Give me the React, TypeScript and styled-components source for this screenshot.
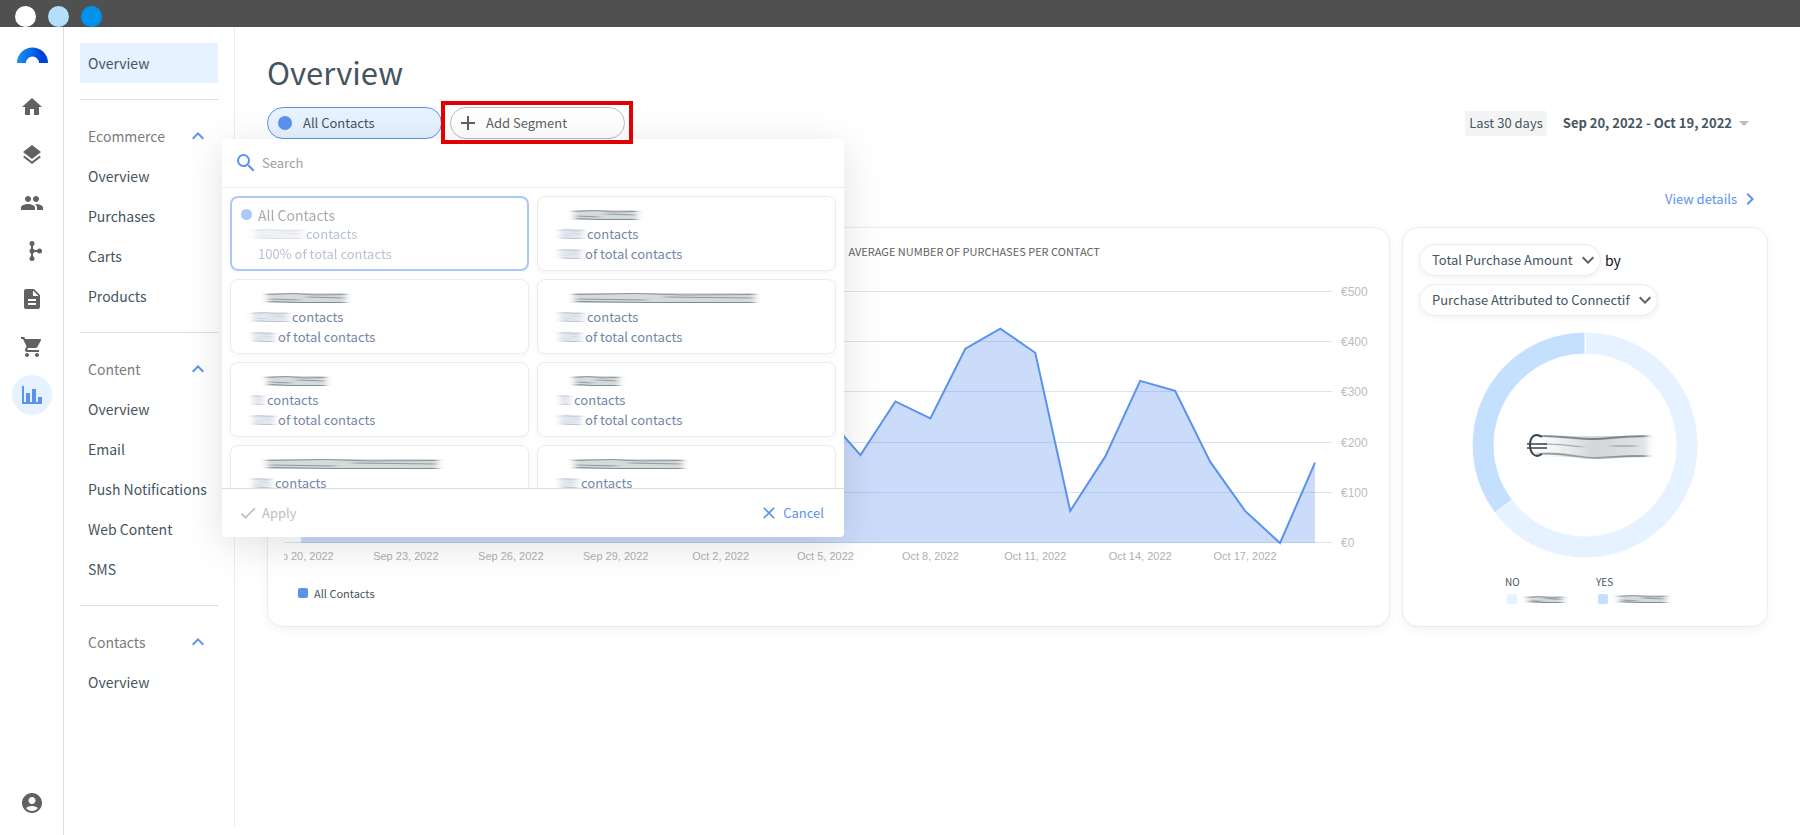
import React, { useId } from "react";
import styled, { createGlobalStyle } from "styled-components";
import {
  MdAccountCircle,
  MdAdd,
  MdArrowDropDown,
  MdCheck,
  MdChevronRight,
  MdClose,
  MdDescription,
  MdKeyboardArrowDown,
  MdKeyboardArrowUp,
  MdHome,
  MdLayers,
  MdPeople,
  MdSearch,
  MdShoppingCart,
} from "react-icons/md";

const color = {
  ink: "#455560",
  grey: "#616161",
  muted: "#7b7b7b",
  blue: "#5b92ee",
  pale: "#e6f2ff",
  slate: "#7486a8",
  line: "#dddddd",
  soft: "#ececec",
};

const GlobalStyle = createGlobalStyle`
  *, *::before, *::after { box-sizing: border-box; }
  body {
    margin: 0;
    background: #fff;
    color: ${color.ink};
    font-family: "Noto Sans CJK SC", "Noto Sans", sans-serif;
    font-size: 14px;
    line-height: 20px;
  }
  button, input, select { font: inherit; color: inherit; }
  a { color: inherit; text-decoration: none; }
  ul { list-style: none; margin: 0; padding: 0; }
`;

/* ---------- frame ---------- */

const Page = styled.div`
  display: flex;
  flex-direction: column;
  min-height: 100vh;
`;

const WindowBar = styled.div`
  display: flex;
  align-items: flex-end;
  gap: 12px;
  height: 27px;
  padding-left: 15px;
  background: #505050;
`;

const WindowDot = styled.span<{ $fill: string }>`
  width: 21px;
  height: 21px;
  border-radius: 50%;
  background: ${(p) => p.$fill};
`;

const Body = styled.div`
  display: flex;
  flex: 1;
`;

const Rail = styled.nav`
  display: flex;
  flex-direction: column;
  align-items: center;
  gap: 8px;
  flex: none;
  width: 64px;
  padding: 12px 0 12px 1px;
  border-right: 1px solid ${color.line};
`;

const Logo = styled.svg`
  margin: 8px 0 16px;
`;

const RailLink = styled.a<{ $active?: boolean }>`
  display: grid;
  place-items: center;
  width: 40px;
  height: 40px;
  border-radius: 50%;
  font-size: 24px;
  color: ${(p) => (p.$active ? color.blue : color.grey)};
  background: ${(p) => (p.$active ? color.pale : "transparent")};

  &:last-child { margin-top: auto; }
`;

const SideNav = styled.nav`
  flex: none;
  width: 171px;
  margin-bottom: 8px;
  padding: 16px 16px 0;
  border-right: 1px solid ${color.soft};
`;

const NavSection = styled.ul`
  & + & {
    margin-top: 16px;
    padding-top: 16px;
    border-top: 1px solid ${color.line};
  }
`;

const NavLink = styled.a<{ $active?: boolean }>`
  display: block;
  height: 40px;
  padding-left: 8px;
  font-size: 14px;
  line-height: 41px;
  white-space: nowrap;
  background: ${(p) => (p.$active ? color.pale : "transparent")};
`;

const NavHeading = styled.button`
  display: flex;
  align-items: center;
  justify-content: space-between;
  width: 100%;
  height: 40px;
  padding: 0 8px;
  border: 0;
  background: none;
  font-size: 14px;
  color: ${color.muted};

  svg { color: ${color.blue}; font-size: 24px; }
`;

/* ---------- main column ---------- */

const Main = styled.main`
  flex: 1;
  min-width: 0;
  padding: 23px 32px;
`;

const Title = styled.h1`
  margin: 0 0 13px;
  font-size: 31px;
  font-weight: 400;
  line-height: 44px;
`;

const Toolbar = styled.div`
  position: relative;
  display: flex;
  align-items: center;
  justify-content: space-between;
  height: 32px;
`;

const Segments = styled.div`
  display: flex;
  gap: 8px;
`;

const SegmentPill = styled.button<{ $selected?: boolean }>`
  display: flex;
  align-items: center;
  gap: 9px;
  width: 175px;
  height: 32px;
  padding: 0 8px;
  border: 1px solid ${(p) => (p.$selected ? color.blue : "#bdbdbd")};
  border-radius: 16px;
  background: ${(p) => (p.$selected ? color.pale : "#fff")};
  color: ${(p) => (p.$selected ? color.ink : color.grey)};
  font-size: 13px;

  svg { font-size: 24px; }
`;

const PillIcon = styled.span`
  display: flex;
  flex: none;
  justify-content: center;
  width: 18px;

  svg { flex: none; }
`;

const Highlighted = styled.div`
  position: relative;

  &::after {
    content: "";
    position: absolute;
    inset: -6px -8px -5px -9px;
    z-index: 3;
    border: 4px solid #e30000;
    pointer-events: none;
  }
`;

const Dot = styled.span<{ $size: number }>`
  flex: none;
  width: ${(p) => p.$size}px;
  height: ${(p) => p.$size}px;
  border-radius: 50%;
  background: ${color.blue};
`;

const DateRange = styled.button`
  display: flex;
  align-items: center;
  padding: 0;
  margin-right: 12px;
  border: 0;
  background: none;
  font-size: 13px;

  strong { margin-left: 16px; font-weight: 700; }
  svg { font-size: 24px; color: #bdbdbd; }
`;

const RangeChip = styled.span`
  padding: 2px 4px 3px;
  border-radius: 2px;
  background: #f4f4f4;
`;

const DetailsRow = styled.div`
  display: flex;
  justify-content: flex-end;
  padding: 48px 6px 16px;
`;

const DetailsLink = styled.a`
  display: flex;
  align-items: center;
  gap: 1px;
  color: ${color.blue};
  font-size: 13px;

  svg { font-size: 24px; }
`;

const Cards = styled.div`
  display: grid;
  grid-template-columns: minmax(0, 1fr) 366px;
  gap: 12px;
`;

const Card = styled.section`
  display: flex;
  flex-direction: column;
  min-height: 400px;
  padding: 16px;
  border: 1px solid ${color.soft};
  border-radius: 16px;
  background: #fff;
  box-shadow: 0 3px 10px rgba(0, 0, 0, 0.05);
`;

/* ---------- area chart ---------- */

const ChartTitle = styled.h2`
  margin: 0 0 12px;
  padding-left: calc(50% + 20px);
  font-size: 11px;
  font-weight: 400;
  line-height: 15px;
  white-space: nowrap;
  color: ${color.grey};
`;

const ChartSvg = styled.svg`
  display: block;
  width: 100%;
  height: auto;
  font-family: "Liberation Sans", Arial, sans-serif;
  font-size: 11px;
`;

const ValueLabel = styled.text`
  font-size: 12px;
  fill: #bdbdbd;
`;

const ChartLegend = styled.div`
  display: flex;
  align-items: center;
  gap: 6px;
  padding: 16px 14px 0;
  font-size: 11px;
`;

const Swatch = styled.span<{ $fill: string }>`
  width: 10px;
  height: 10px;
  border-radius: 2px;
  background: ${(p) => p.$fill};
`;

const values = [
  140, 120, 180, 230, 160, 110, 150, 210, 260, 190, 130, 170, 220, 290, 240,
  255, 175, 282, 248, 387, 427, 379, 64, 172, 323, 303, 162, 64, 0, 160,
];
const ticks = [
  "Sep 20, 2022",
  "Sep 23, 2022",
  "Sep 26, 2022",
  "Sep 29, 2022",
  "Oct 2, 2022",
  "Oct 5, 2022",
  "Oct 8, 2022",
  "Oct 11, 2022",
  "Oct 14, 2022",
  "Oct 17, 2022",
];
const axis = { left: 17, right: 1031, base: 272, unit: 0.502 };

function AreaChart() {
  const step = (axis.right - axis.left) / (values.length - 1);
  const points = values.map((v, i) => `${axis.left + i * step},${axis.base - v * axis.unit}`);
  return (
    <ChartSvg viewBox="0 0 1089 296" role="img" aria-label="Purchases per contact">
      {[500, 400, 300, 200, 100, 0].map((v) => {
        const y = Math.round(axis.base - v * axis.unit) - 0.5;
        return (
          <g key={v}>
            <line x1="0" x2="1048" y1={y} y2={y} stroke="#dbe3f2" />
            <ValueLabel x="1057" y={y + 4}>
              €{v}
            </ValueLabel>
          </g>
        );
      })}
      <polygon
        points={`${axis.left},${axis.base} ${points.join(" ")} ${axis.right},${axis.base}`}
        fill={color.blue}
        fillOpacity="0.32"
      />
      <polyline points={points.join(" ")} fill="none" stroke={color.blue} strokeWidth="2" />
      {ticks.map((label, i) => (
        <text key={label} x={axis.left + i * 3 * step} y="289" textAnchor="middle" fill="#b0b0b0">
          {label}
        </text>
      ))}
    </ChartSvg>
  );
}

/* ---------- donut card ---------- */

const Filters = styled.div`
  display: flex;
  flex-wrap: wrap;
  align-items: center;
  gap: 8px 4px;
  color: #111;
  font-size: 14px;
`;

const SelectPill = styled.label`
  position: relative;
  display: inline-flex;
  align-items: center;
  color: ${color.grey};

  select {
    height: 32px;
    padding: 0 27px 0 12px;
    border: 1px solid ${color.soft};
    border-radius: 16px;
    appearance: none;
    background: #fff;
    box-shadow: 0 2px 6px rgba(0, 0, 0, 0.06);
    color: ${color.ink};
    font-size: 13px;
  }

  svg {
    position: absolute;
    right: 1px;
    font-size: 24px;
    pointer-events: none;
  }
`;

const DonutSvg = styled.svg`
  display: block;
  align-self: center;
  margin-top: 16px;
  width: 226px;
  height: 226px;
`;

const DonutLegend = styled.dl`
  display: flex;
  gap: 29px;
  margin: 16px 0 0 86px;
  font-size: 10px;
  line-height: 16px;
  white-space: nowrap;

  dt { height: 16px; }
  dd { display: flex; align-items: center; gap: 8px; height: 18px; margin: 0 0 0 2px; }
`;

function slice(from: number, to: number) {
  const at = (turn: number, r: number) => {
    const a = turn * 2 * Math.PI;
    return `${113 + r * Math.sin(a)} ${113 - r * Math.cos(a)}`;
  };
  const big = to - from > 0.5 ? 1 : 0;
  return `M${at(from, 113)}A113 113 0 ${big} 1 ${at(to, 113)}L${at(to, 91)}A91 91 0 ${big} 0 ${at(from, 91)}Z`;
}

/* ---------- redacted values ---------- */

const SmudgeSvg = styled.svg`
  flex: none;
  display: block;
  overflow: visible;
`;

type SmudgeProps = { width: number; height?: number; tint: string; strong?: boolean };

function Smudge({ width, height = 14, tint, strong }: SmudgeProps) {
  const id = useId();
  const w = width;
  const h = height;
  return (
    <SmudgeSvg width={w} height={h} viewBox={`0 0 ${w} ${h}`} aria-hidden="true">
      <defs>
        <filter id={id} x="-20%" y="-50%" width="140%" height="200%">
          <feGaussianBlur stdDeviation="3 0.6" />
        </filter>
      </defs>
      <g filter={`url(#${id})`} fill="none" stroke={tint}>
        <rect x="3" y="2" width={w - 7} height={h - 4} fill={tint} stroke="none" opacity={strong ? 0.22 : 0.2} />
        <path d={`M2 3.500L${w * 0.35} 2.500L${w * 0.6} 4L${w - 4} 3.500`} opacity={strong ? 0.55 : 0.35} />
        <path d={`M6 ${h / 2 + 1}L${w * 0.4} ${h / 2 + 2}M${w * 0.5} ${h / 2 - 1}L${w - 6} ${h / 2}`} opacity={strong ? 0.5 : 0.2} />
        <path d={`M5 ${h - 3.5}L${w * 0.4} ${h - 2.5}L${w - 4} ${h - 2.5}`} opacity={strong ? 0.6 : 0.35} />
      </g>
    </SmudgeSvg>
  );
}

/* ---------- segment picker ---------- */

const Picker = styled.div`
  position: absolute;
  top: 100%;
  left: -45px;
  z-index: 2;
  width: 622px;
  border-radius: 4px;
  background: #fff;
  box-shadow: 0 8px 40px rgba(0, 0, 0, 0.12);
`;

const SearchRow = styled.label`
  display: flex;
  align-items: center;
  gap: 4px;
  height: 49px;
  padding: 0 12px;
  border-bottom: 1px solid ${color.soft};

  svg { font-size: 24px; color: ${color.blue}; }
  input {
    flex: 1;
    border: 0;
    outline: 0;
    padding: 0;
    background: none;
    font-size: 13px;
  }
  input::placeholder { color: #9e9e9e; opacity: 1; }
`;

const SegmentList = styled.ul`
  display: grid;
  grid-template-columns: 1fr 1fr;
  grid-auto-rows: 75px;
  gap: 8px;
  height: 300px;
  padding: 8px;
  overflow: hidden;
`;

const SegmentCard = styled.button<{ $selected?: boolean }>`
  display: flex;
  flex-direction: column;
  width: 100%;
  height: 100%;
  padding: ${(p) => (p.$selected ? "7px" : "8px")} 8px 0;
  border: ${(p) => (p.$selected ? `2px solid ${color.blue}` : `1px solid ${color.soft}`)};
  border-radius: 8px;
  background: #fff;
  box-shadow: 0 2px 6px rgba(0, 0, 0, 0.04);
  opacity: ${(p) => (p.$selected ? 0.5 : 1)};
  text-align: left;
`;

const SegmentName = styled.span<{ $inset: number }>`
  display: flex;
  flex: none;
  align-items: center;
  gap: 6px;
  height: 19px;
  padding-left: ${(p) => p.$inset}px;
  font-size: 14px;
  line-height: 18px;
  color: #555;
`;

const SegmentFact = styled.span<{ $inset: number }>`
  display: flex;
  flex: none;
  align-items: center;
  height: 20px;
  padding-left: ${(p) => p.$inset}px;
  font-size: 13px;
  white-space: nowrap;
  color: ${color.slate};
`;

const PickerFooter = styled.div`
  display: flex;
  justify-content: space-between;
  height: 49px;
  padding: 0 16px;
  border-top: 1px solid ${color.line};
`;

const TextButton = styled.button`
  display: flex;
  align-items: center;
  gap: 4px;
  padding: 0 4px 0 0;
  border: 0;
  background: none;
  font-size: 13px;
  color: ${color.blue};

  &:disabled { color: #bdbdbd; padding: 0; }
  svg { font-size: 20px; }
`;

const segments: { name: number; count: number; share?: number }[] = [
  { name: 70, count: 30, share: 28 },
  { name: 86, count: 42, share: 28 },
  { name: 188, count: 30, share: 28 },
  { name: 66, count: 17, share: 28 },
  { name: 52, count: 17, share: 28 },
  { name: 178, count: 25 },
  { name: 116, count: 24 },
];

function SegmentPicker() {
  return (
    <Picker role="dialog" aria-label="Segments">
      <SearchRow>
        <MdSearch />
        <input type="text" placeholder="Search" aria-label="Search" />
      </SearchRow>
      <SegmentList>
        <li>
          <SegmentCard type="button" $selected>
            <SegmentName $inset={1}>
              <Dot $size={11} />
              All Contacts
            </SegmentName>
            <SegmentFact $inset={12}>
              <Smudge width={54} tint={color.slate} />
              contacts
            </SegmentFact>
            <SegmentFact $inset={18}>100% of total contacts</SegmentFact>
          </SegmentCard>
        </li>
        {segments.map((s, i) => (
          <li key={i}>
            <SegmentCard type="button" aria-label="Segment">
              <SegmentName $inset={25}>
                <Smudge width={s.name} tint={color.ink} strong />
              </SegmentName>
              <SegmentFact $inset={11}>
                <Smudge width={s.count} tint={color.slate} />
                contacts
              </SegmentFact>
              {s.share && (
                <SegmentFact $inset={11}>
                  <Smudge width={s.share} tint={color.slate} />
                  of total contacts
                </SegmentFact>
              )}
            </SegmentCard>
          </li>
        ))}
      </SegmentList>
      <PickerFooter>
        <TextButton type="button" disabled>
          <MdCheck />
          Apply
        </TextButton>
        <TextButton type="button">
          <MdClose />
          Cancel
        </TextButton>
      </PickerFooter>
    </Picker>
  );
}

/* ---------- drawn icons ---------- */

function BranchIcon() {
  return (
    <svg width="24" height="24" viewBox="0 0 24 24" fill="currentColor">
      <path d="M11 4h2v16h-2zM12 11h8v2h-8z" />
      <circle cx="12" cy="4.5" r="2.5" />
      <circle cx="12" cy="12" r="2.5" />
      <circle cx="12" cy="19.5" r="2.5" />
      <circle cx="19.5" cy="12" r="2.5" />
    </svg>
  );
}

function BarsIcon() {
  return (
    <svg width="24" height="24" viewBox="0 0 24 24" fill="currentColor">
      <path d="M2 3h2v16h2v-9h4v9h2V6h4v13h2v-5h4v7H2z" />
    </svg>
  );
}

const navSections = [
  { heading: "Ecommerce", items: ["Overview", "Purchases", "Carts", "Products"] },
  { heading: "Content", items: ["Overview", "Email", "Push Notifications", "Web Content", "SMS"] },
  { heading: "Contacts", items: ["Overview"] },
];

export default function App() {
  return (
    <Page>
      <GlobalStyle />
      <WindowBar>
        <WindowDot $fill="#fff" />
        <WindowDot $fill="#b3dffa" />
        <WindowDot $fill="#0093ee" />
      </WindowBar>
      <Body>
        <Rail aria-label="Sections">
          <Logo width="31" height="16" viewBox="0 0 31 16" aria-hidden="true">
            <defs>
              <linearGradient id="arc" x1="0" x2="1">
                <stop offset="0" stopColor="#2090f0" />
                <stop offset="0.5" stopColor="#0066e8" />
                <stop offset="0.8" stopColor="#003fdc" />
                <stop offset="1" stopColor="#0044e0" />
              </linearGradient>
            </defs>
            <path d="M0 16a15.500 15.500 0 0 1 31 0h-9a6.500 6.500 0 0 0-13 0z" fill="url(#arc)" />
          </Logo>
          <RailLink href="#home" aria-label="Home"><MdHome /></RailLink>
          <RailLink href="#layers" aria-label="Layers"><MdLayers /></RailLink>
          <RailLink href="#people" aria-label="People"><MdPeople /></RailLink>
          <RailLink href="#flows" aria-label="Workflows"><BranchIcon /></RailLink>
          <RailLink href="#content" aria-label="Documents"><MdDescription /></RailLink>
          <RailLink href="#shop" aria-label="Shop"><MdShoppingCart /></RailLink>
          <RailLink href="#reports" aria-label="Reports" $active><BarsIcon /></RailLink>
          <RailLink href="#account" aria-label="Account"><MdAccountCircle /></RailLink>
        </Rail>
        <SideNav aria-label="Reports">
          <NavSection>
            <li><NavLink href="#overview" $active>Overview</NavLink></li>
          </NavSection>
          {navSections.map((section) => (
            <NavSection key={section.heading}>
              <li>
                <NavHeading type="button" aria-expanded="true">
                  {section.heading}
                  <MdKeyboardArrowUp />
                </NavHeading>
              </li>
              {section.items.map((item) => (
                <li key={item}><NavLink href="#item">{item}</NavLink></li>
              ))}
            </NavSection>
          ))}
        </SideNav>
        <Main>
          <Title>Overview</Title>
          <Toolbar>
            <Segments>
              <SegmentPill type="button" $selected>
                <PillIcon><Dot $size={14} /></PillIcon>
                All Contacts
              </SegmentPill>
              <Highlighted>
                <SegmentPill type="button">
                  <PillIcon><MdAdd /></PillIcon>
                  Add Segment
                </SegmentPill>
              </Highlighted>
            </Segments>
            <SegmentPicker />
            <DateRange type="button">
              <RangeChip>Last 30 days</RangeChip>
              <strong>Sep 20, 2022 - Oct 19, 2022</strong>
              <MdArrowDropDown />
            </DateRange>
          </Toolbar>
          <DetailsRow>
            <DetailsLink href="#details">
              View details
              <MdChevronRight />
            </DetailsLink>
          </DetailsRow>
          <Cards>
            <Card>
              <ChartTitle>AVERAGE NUMBER OF PURCHASES PER CONTACT</ChartTitle>
              <AreaChart />
              <ChartLegend>
                <Swatch $fill={color.blue} />
                All Contacts
              </ChartLegend>
            </Card>
            <Card>
              <Filters>
                <SelectPill>
                  <select aria-label="Metric">
                    <option>Total Purchase Amount</option>
                  </select>
                  <MdKeyboardArrowDown />
                </SelectPill>
                by
                <SelectPill>
                  <select aria-label="Grouping">
                    <option>Purchase Attributed to Connectif</option>
                  </select>
                  <MdKeyboardArrowDown />
                </SelectPill>
              </Filters>
              <DonutSvg viewBox="0 0 226 226" role="img" aria-label="Share of purchases">
                <defs>
                  <filter id="smear" x="-10%" y="-30%" width="120%" height="160%">
                    <feGaussianBlur stdDeviation="3 0.7" />
                  </filter>
                  <linearGradient id="fade" x1="0" x2="1">
                    <stop offset="0" stopColor={color.ink} stopOpacity="0" />
                    <stop offset="0.5" stopColor={color.ink} stopOpacity="0.24" />
                    <stop offset="1" stopColor={color.ink} stopOpacity="0.16" />
                  </linearGradient>
                </defs>
                <path d={slice(0, 0.647)} fill={color.pale} stroke="#fff" />
                <path d={slice(0.647, 1)} fill="#c5e0ff" stroke="#fff" />
                <g fill="none" stroke="#36454f">
                  <path d="M70 105c-7-5-12 0-12 8s5 14 12 9" strokeWidth="2" />
                  <path d="M55 112h20M55 116h20" strokeWidth="1.400" />
                  <g filter="url(#smear)">
                    <rect x="68" y="104" width="108" height="21" fill="url(#fade)" stroke="none" />
                    <path d="M68 104C85 103 110 108 126 107S150 104 175 104" strokeWidth="2" opacity="0.6" />
                    <path d="M66 122C85 119 110 127 126 126S150 124 175 124" strokeWidth="2" opacity="0.5" />
                    <path d="M70 112c20 0 30 2 40 3M140 114h24" opacity="0.5" />
                  </g>
                </g>
              </DonutSvg>
              <DonutLegend>
                <div>
                  <dt>NO</dt>
                  <dd>
                    <Swatch $fill={color.pale} />
                    <Smudge width={42} height={11} tint={color.ink} strong />
                  </dd>
                </div>
                <div>
                  <dt>YES</dt>
                  <dd>
                    <Swatch $fill="#c5e0ff" />
                    <Smudge width={54} height={12} tint={color.ink} strong />
                  </dd>
                </div>
              </DonutLegend>
            </Card>
          </Cards>
        </Main>
      </Body>
    </Page>
  );
}
